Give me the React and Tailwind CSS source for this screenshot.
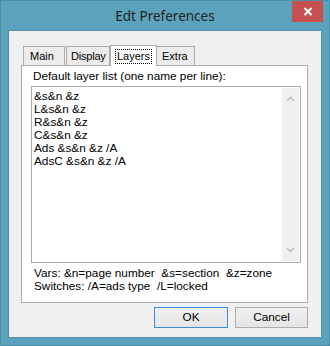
import React from "react";

const lines = ["&s&n &z", "L&s&n &z", "R&s&n &z", "C&s&n &z", "Ads &s&n &z /A", "AdsC &s&n &z /A"];

function Chevron({ up }) {
  return (
    <svg width="9" height="6" viewBox="0 0 9 6">
      <path d={up ? "M1 5 L4.5 1.5 L8 5" : "M1 1 L4.5 4.5 L8 1"} fill="none" stroke="#c2c2c2" strokeWidth="1.6" />
    </svg>
  );
}

export default function App() {
  return (
    <div
      className="relative w-[330px] h-[346px] bg-[#5ba3bd] border border-[#4b8ea8] flex flex-col"
      style={{ fontFamily: "'Liberation Sans', Arial, sans-serif" }}
    >
      <div className="h-[29px] flex items-center justify-center">
        <span className="text-[13.5px] text-[#222] mt-[1px]" style={{ fontFamily: "'Noto Sans', 'Open Sans', sans-serif" }}>
          Edt Preferences
        </span>
      </div>
      <div className="absolute right-[6px] top-0 w-[31px] h-[21px] bg-[#c75050] flex items-center justify-center">
        <svg width="10" height="9" viewBox="0 0 10 9">
          <path d="M1.5 1 L8.5 8 M8.5 1 L1.5 8" stroke="#fff" strokeWidth="2" />
        </svg>
      </div>
      <div className="mx-[7px] mb-[7px] flex-1 bg-[#f0f0f0] border border-[#4f93ac] flex flex-col pl-[12px] pr-[13px] pt-[13px]">
        <div className="flex items-end h-[21px] pl-[2px] text-[11px] text-black">
          <div className="w-[42px] h-[19px] border border-b-0 border-[#acacac] bg-[#ececec] flex items-center pl-[6px] pt-[1px]">Main</div>
          <div className="w-[44px] h-[19px] border border-b-0 border-[#acacac] bg-[#ececec] flex items-center pl-[4px] pt-[1px] ml-[1px] tracking-[-0.2px]">Display</div>
          <div className="w-[47px] h-[21px] border border-b-0 border-[#acacac] bg-white flex items-center justify-center -mb-[1px] relative z-10">
            <span className="border border-dotted border-black px-[1px] leading-[13px]">Layers</span>
          </div>
          <div className="w-[38px] h-[19px] border border-b-0 border-l-0 border-[#acacac] bg-[#ececec] flex items-center pl-[5px] pt-[1px]">Extra</div>
        </div>
        <div className="h-[238px] bg-white border border-[#acacac] flex flex-col text-[11.8px] text-black">
          <div className="pl-[11px] pt-[4px] h-[20px] leading-[13px]">Default layer list (one name per line):</div>
          <div className="ml-[9px] w-[270px] h-[177px] border border-[#acacac] flex">
            <div className="flex-1 pl-[2px] pt-[3px] leading-[13px]">
              {lines.map((l) => (
                <div key={l}>{l}</div>
              ))}
            </div>
            <div className="w-[17px] my-[1px] mr-[1px] bg-[#f0f0f0] flex flex-col items-center justify-between py-[8px]">
              <Chevron up />
              <Chevron />
            </div>
          </div>
          <div className="pl-[12px] pt-[4px] leading-[13px]">
            <div>Vars: &amp;n=page number&nbsp; &amp;s=section&nbsp; &amp;z=zone</div>
            <div>Switches: /A=ads type&nbsp; /L=locked</div>
          </div>
        </div>
        <div className="flex justify-end gap-[7px] mt-[4px] text-[11.8px] text-black">
          <div className="w-[74px] h-[21px] border border-[#3c8fe0] bg-gradient-to-b from-[#f0f0f0] to-[#e5e5e5] flex items-center justify-center">OK</div>
          <div className="w-[73px] h-[21px] border border-[#acacac] bg-gradient-to-b from-[#f0f0f0] to-[#e5e5e5] flex items-center justify-center">Cancel</div>
        </div>
      </div>
    </div>
  );
}
